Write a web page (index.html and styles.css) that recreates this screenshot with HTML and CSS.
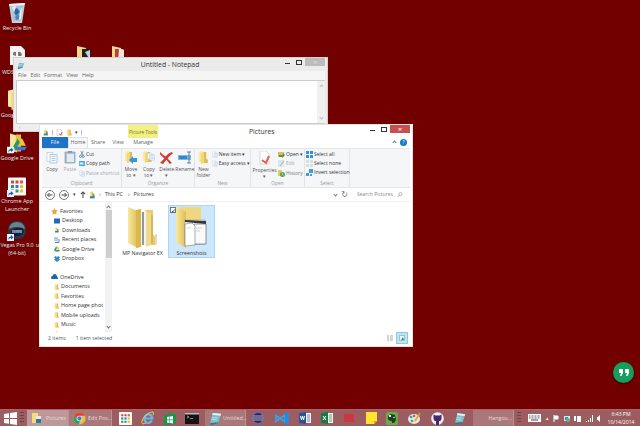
FILE: index.html
```html
<!DOCTYPE html>
<html lang="en">
<head>
<meta charset="utf-8">
<title>Desktop</title>
<link rel="stylesheet" href="styles.css">
</head>
<body>
<svg width="0" height="0" class="defs">
  <defs>
    <linearGradient id="gold" x1="0" x2="1"><stop offset="0" stop-color="#f8e8a0"/><stop offset="1" stop-color="#dfbd55"/></linearGradient>
    <symbol id="folder" viewBox="0 0 10 12"><path d="M1 1 5 0v11L1 10z" fill="#f9e9a3"/><path d="M5 1h3v6l1.5 1v3H4z" fill="#e2bb4c"/><path d="M3 2 6 1v10l-3 1z" fill="#f3d676"/></symbol>
    <symbol id="picfolder" viewBox="0 0 10 12"><path d="M2 1h4v9H2z" fill="#f0d16c"/><path d="M5 4h3v6H5z" fill="#6fa65f"/><path d="M1 8h7v3H1z" fill="#347fb3"/></symbol>
    <symbol id="drive" viewBox="0 0 12 12"><path d="M4 1h4l3 6H7z" fill="#f4c530"/><path d="M4 1 0 8l2 3 4-7z" fill="#2b9a5b"/><path d="M3 8h9l-2 3H2z" fill="#3777d8"/></symbol>
    <symbol id="shortcut" viewBox="0 0 7 7"><path d="M0 0h7v7H0z" fill="#eaf4ff"/><path d="M1.5 6Q1 3 4 2.6V1l2.5 2.4L4 5.5V4Q2 4 1.5 6z" fill="#1e5fa8"/></symbol>
    <symbol id="chrome" viewBox="0 0 14 14"><circle cx="7" cy="7" r="6.5" fill="#eac13a"/><path d="M1.3 4A6.5 6.5 0 0 1 12.9 4H7L4.5 8z" fill="#da4437"/><path d="M1.3 4 4.5 9l3 .8L6 13.4A6.5 6.5 0 0 1 1.3 4z" fill="#1fa463"/><circle cx="7" cy="7" r="3" fill="#f4f4f4"/><circle cx="7" cy="7" r="2.3" fill="#3f7fe0"/></symbol>
    <symbol id="apps" viewBox="0 0 18 18"><rect width="18" height="18" rx="1" fill="#fafafa"/><path d="M3 3h3v3H3zM7.5 3h3v3h-3z" fill="#dc4438"/><path d="M12 3h3v3h-3z" fill="#d95b48"/><path d="M3 7.5h3v3H3z" fill="#259b5a"/><path d="M7.5 7.5h3v3h-3z" fill="#3976d3"/><path d="M12 7.5h3v3h-3z" fill="#efbd2c"/><path d="M3 12h3v3H3zM7.5 12h3v3h-3z" fill="#269c5c"/><path d="M12 12h3v3h-3z" fill="#eebe32"/></symbol>
    <symbol id="notepad" viewBox="0 0 14 14"><path d="m4 1 9 1-3 10-9 1z" fill="#7bbfca"/><path d="m4 1 9 1-.6 2-9-1z" fill="#e5f5f8"/><path d="m3 6 6 .5M2.5 8l6 .5" stroke="#c4e8ee" stroke-width=".8"/><path d="m1 12 9-1v1l-8 2z" fill="#34757e"/></symbol>
    <symbol id="cut" viewBox="0 0 7 8"><path d="m2 0 3 5M5 0 2 5" stroke="#5b7188" stroke-width=".8"/><circle cx="1.8" cy="6.2" r="1.2" fill="none" stroke="#3185cc"/><circle cx="5" cy="6.2" r="1.2" fill="none" stroke="#3185cc"/></symbol>
    <symbol id="doc" viewBox="0 0 12 12"><path d="M1 1h6v9H1z" fill="#fff" stroke="#a1c4df" stroke-width=".6"/><path d="M4 3h7v8.5H4z" fill="#f5faff" stroke="#86add0" stroke-width=".6"/><path d="M5.5 5h4M5.5 7h4M5.5 9h4" stroke="#83abcf" stroke-width=".6"/></symbol>
    <symbol id="trashx" viewBox="0 0 12 12"><path d="M0 1q3 3 5 4 3-3 6-4l1 1Q8 5 7 7q2 2 4 4l-2 1-3-4q-2 2-3 4l-3-1 4-4Q2 5 0 3z" fill="#d7382c"/></symbol>
    <symbol id="search" viewBox="0 0 7 7"><circle cx="4" cy="2.5" r="1.8" fill="none" stroke="#888" stroke-width=".7"/><path d="M2.5 4 .5 6" stroke="#888" stroke-width=".8"/></symbol>
    <symbol id="bluefile" viewBox="0 0 8 7"><path d="M0 0h8v7H0z" fill="#4aa4dc"/><path d="M1 2h5v3H1z" fill="#d7effc"/></symbol>
    <symbol id="grid4" viewBox="0 0 7 7"><path d="M0 0h3v3H0zM4 0h3v3H4zM0 4h3v3H0zM4 4h3v3H4z"/></symbol>
  </defs>
</svg>

<div class="desktop">
  <figure class="shortcut" style="left:-8px;top:2px">
    <svg width="18" height="22" viewBox="0 0 18 22"><path d="m1 2 16-1-3 20H4z" fill="#c3d2df"/><path d="m3 4 12-1-2 16H5z" fill="#a9c0d3"/><path d="m5 8 4-2 3 4-4 4z" fill="#2568b1"/><path d="m7 15 4-3 1 5-4 1z" fill="#4a83bd"/><path d="m4 5 4-1-2 7zm8 4 2-4-1 12-2 1z" fill="#e6f0f6"/><path d="m1 2 16-1-.5 2-15 1z" fill="#eef2f4"/></svg>
    <figcaption>Recycle Bin</figcaption>
  </figure>
  <figure class="shortcut" style="left:-8px;top:46px">
    <svg width="15" height="19" viewBox="0 0 15 19"><path d="M0 0h11l4 4v15H0z" fill="#f5f4f2"/><path d="M3 9q0-4 3-3v4zm5 1V6q3-1 4 3l-1 1z" fill="#777"/></svg>
    <figcaption class="cap-wd">WDS</figcaption>
  </figure>
  <figure class="shortcut" style="left:59px;top:45px"><svg width="18" height="22" viewBox="0 0 18 22"><path d="m2 1 9 2v19H2z" fill="#f1d985"/><path d="M7 4h9v14H7z" fill="#222"/><path d="m10 7 5-2v10z" fill="#c7d0d5"/></svg></figure>
  <figure class="shortcut" style="left:94px;top:45px"><svg width="18" height="22" viewBox="0 0 18 22"><path d="m2 1 9 2v19H2z" fill="#f1d985"/><path d="M5 4h9v15H5z" fill="#c43c38"/><path d="m9 3 5 2v14H8z" fill="#e8e7df"/></svg></figure>
  <figure class="shortcut" style="left:-10px;top:89px">
    <svg width="18" height="21"><use href="#folder"/></svg><figcaption class="cap-goog">Goog</figcaption>
  </figure>
  <figure class="shortcut" style="left:-8px;top:132px">
    <svg width="20" height="22" viewBox="0 0 20 21"><path d="m3 1 7 2v17l-7-2z" fill="#f7e69c"/><path d="M9 2h5v17H8z" fill="#e1bd57"/><use href="#drive" x="6" y="5" width="14" height="14"/><use href="#shortcut" y="14" width="7" height="7"/></svg>
    <figcaption>Google Drive</figcaption>
  </figure>
  <figure class="shortcut" style="left:-8px;top:176px">
    <svg width="20" height="21" viewBox="0 0 20 21"><use href="#apps" x="1" y="1" width="18" height="19"/><use href="#shortcut" y="14" width="7" height="7"/></svg>
    <figcaption>Chrome App<br>Launcher</figcaption>
  </figure>
  <figure class="shortcut vegas" style="left:-8px;top:220px">
    <svg width="20" height="21" viewBox="0 0 20 21"><rect x="1" y="1" width="18" height="18" rx="8" fill="#283743"/><path d="M2 9q1-7 8-7t8 7q-8-4-16 0z" fill="#6c8190"/><path d="m3 12 5-4h7l2 4-5 4H6z" fill="#18202f"/><path d="M5 10h10v3H5z" fill="#8376b7"/><path d="M9 10h5v2H9z" fill="#49a6b2"/><use href="#shortcut" y="14" width="7" height="7"/></svg>
    <figcaption>Vegas Pro 9.0<br>(64-bit)</figcaption>
  </figure>
  <figure class="shortcut behind" style="left:35px;top:241px"><figcaption>u</figcaption></figure>

  <section class="window notepad">
    <header class="np-title"><svg width="8" height="8"><use href="#notepad"/></svg><h1>Untitled - Notepad</h1>
      <div class="controls"><i class="min"></i><i class="max"></i><b class="close grey">×</b></div></header>
    <nav class="np-menu"><span>File</span><span>Edit</span><span>Format</span><span>View</span><span>Help</span></nav>
    <div class="np-body"><div class="np-page"></div><div class="np-scroll"><i class="chev up"></i><i class="chev down"></i></div></div>
    <div class="np-bottom">‹</div>
  </section>

  <section class="window explorer">
    <header class="ex-title">
      <div class="quick"><svg width="6" height="7"><use href="#picfolder"/></svg><i></i><svg width="7" height="7" viewBox="0 0 7 7"><path d="M1 0h3l2 2v5H1z" fill="#fff" stroke="#aaa" stroke-width=".5"/><path d="m3 5 2 1 1-3" stroke="#d45e52" fill="none"/></svg><svg width="6" height="7"><use href="#folder"/></svg><small>▾</small><i></i></div>
      <div class="picture-tools">Picture Tools</div>
      <h1>Pictures</h1>
      <div class="controls"><i class="min"></i><i class="max"></i><b class="close">×</b></div>
    </header>
    <nav class="tabs"><b class="file">File</b><span class="active">Home</span><span>Share</span><span>View</span><span class="manage">Manage</span><span class="help"><i class="chev up"></i><b>?</b></span></nav>
    <div class="ribbon">
      <div class="group clipboard">
        <div class="tools">
          <div class="big"><svg width="12" height="13"><use href="#doc"/></svg>Copy</div>
          <div class="big paste"><svg width="12" height="13" viewBox="0 0 12 13"><path d="M1 1h10v11H1z" fill="#b1bfd5" stroke="#8495b4" stroke-width=".7"/><path d="M3 3h7v8H3z" fill="#e2eaf4"/><path d="M4 0h4v2H4z" fill="#8999ae"/></svg><em>Paste</em></div>
          <div class="list"><span><svg width="6" height="7"><use href="#cut"/></svg>Cut</span><span><svg width="6" height="5"><use href="#bluefile"/></svg>Copy path</span><span class="off"><svg width="6" height="7"><use href="#doc"/></svg>Paste shortcut</span></div>
        </div><small>Clipboard</small>
      </div>
      <div class="group organize">
        <div class="tools">
          <div class="big"><svg width="13" height="13" viewBox="0 0 13 13"><use href="#folder" width="10" height="12"/><path d="m5 9 4-4v2h4v4H9v2z" fill="#3597dc"/></svg>Move<br>to ▾</div>
          <div class="big"><svg width="13" height="13" viewBox="0 0 13 13"><use href="#folder" width="10" height="12"/><use href="#doc" x="5" width="8" height="11"/></svg>Copy<br>to ▾</div>
          <div class="big"><svg width="13" height="13"><use href="#trashx"/></svg>Delete<br>▾</div>
          <div class="big"><svg width="14" height="13" viewBox="0 0 14 13"><path d="M0 4h13v5H0z" fill="#7bb9e3"/><path d="M1 5h8v3H1z" fill="#3189cc"/><path d="M9 1h4m-2 0v11m-2 0h4" stroke="#56738e" stroke-width=".9"/></svg>Rename</div>
        </div><small>Organize</small>
      </div>
      <div class="group new">
        <div class="tools">
          <div class="big"><svg width="12" height="13"><use href="#folder"/></svg>New<br>folder</div>
          <div class="list"><span><svg width="6" height="7"><use href="#doc"/></svg>New item ▾</span><span><svg width="6" height="7"><use href="#doc"/></svg>Easy access ▾</span></div>
        </div><small>New</small>
      </div>
      <div class="group open">
        <div class="tools">
          <div class="big"><svg width="13" height="14" viewBox="0 0 13 14"><path d="M2 0h6l3 3v10H2z" fill="#fff" stroke="#c2c2c2" stroke-width=".6"/><path d="m4 9 4 3 3-7" fill="none" stroke="#df624f" stroke-width="2"/></svg>Properties<br>▾</div>
          <div class="list"><span><svg width="7" height="7" viewBox="0 0 7 7"><path d="M0 1h6v5H0z" fill="#e0bb5a"/><path d="M1 4h4V2l2 2-3 3V6H1z" fill="#4d9854"/></svg>Open ▾</span><span class="off"><svg width="7" height="7" viewBox="0 0 7 7"><path d="M0 0h6v7H0z" fill="#dbe5ef"/><path d="m2 6 4-5" stroke="#a0b4ca"/></svg>Edit</span><span class="history"><svg width="7" height="7" viewBox="0 0 7 7"><path d="M0 0h4v6H0z" fill="#ecc65c"/><circle cx="4.5" cy="4.5" r="2.5" fill="#4fa855"/><path d="M4.5 3v2h1" stroke="#fff" stroke-width=".5" fill="none"/></svg>History</span></div>
        </div><small>Open</small>
      </div>
      <div class="group select">
        <div class="tools"><div class="list"><span><svg width="7" height="7" fill="#2d91de"><use href="#grid4"/></svg>Select all</span><span><svg width="7" height="7" fill="#d9dee3"><use href="#grid4"/></svg>Select none</span><span><svg width="7" height="7" viewBox="0 0 7 7"><path d="M3 0h4v4H3zM0 4h3v3H0zM4 5h2v2H4z" fill="#3c9de4"/></svg>Invert selection</span></div></div><small>Select</small>
      </div>
    </div>
    <div class="address"><span class="round"><svg width="6" height="6" viewBox="0 0 6 6"><path d="M5.500 3h-5M2.500 1l-2 2 2 2" fill="none" stroke="#444"/></svg></span><span class="round"><svg width="6" height="6" viewBox="0 0 6 6"><path d="M.5 3h5M3.500 1l2 2-2 2" fill="none" stroke="#444"/></svg></span><small>▾</small><svg width="6" height="7" viewBox="0 0 6 7"><path d="M3 7V1M.8 3.200 3 1l2.200 2.200" fill="none" stroke="#555" stroke-width="1.100"/></svg><svg class="place" width="7" height="8"><use href="#picfolder"/></svg><i>›</i><span>This PC</span><i class="second-sep">›</i><span>Pictures</span><i class="chev down"></i><em>↻</em><span class="find">Search Pictures</span><svg width="6" height="6"><use href="#search"/></svg></div>
    <div class="ex-body">
      <aside class="tree">
        <p><svg width="7" height="7" viewBox="0 0 7 7"><path d="m3.5 0 1 2.2 2.5.3-2 1.7.6 2.5-2.1-1.2-2.2 1.2.6-2.5L0 2.5l2.5-.3z" fill="#eba52d"/></svg>Favorites</p>
        <p class="child"><svg width="6" height="6"><rect width="6" height="5" y=".5" fill="#2668b6"/></svg>Desktop</p>
        <p class="child"><svg width="6" height="6"><use href="#picfolder"/></svg>Downloads</p>
        <p class="child"><svg width="6" height="6" viewBox="0 0 6 6"><path d="M0 0h4v4H0z" fill="#b4cde3"/><path d="M1 5.5h4V2" fill="none" stroke="#4687bd"/></svg>Recent places</p>
        <p class="child"><svg width="6" height="6"><use href="#drive"/></svg>Google Drive</p>
        <p class="child"><svg width="6" height="6" viewBox="0 0 6 6"><path d="m1.5 0 1.5 1L4.5 0 6 1.5 4.8 2.5 6 3.500 3 6 0 3.500l1.200-1L0 1.500z" fill="#328bc9"/></svg>Dropbox</p>
        <p class="cloud"><svg width="7" height="6" viewBox="0 0 7 6"><path d="M0 4q0-2 1.500-2Q2 0 3.800 0q1.800 0 2 2Q7 3 7 5H1Q0 5 0 4z" fill="#1767b0"/></svg>OneDrive</p>
        <p class="child"><svg width="5" height="6"><use href="#folder"/></svg>Documents</p>
        <p class="child"><svg width="5" height="6"><use href="#folder"/></svg>Favorites</p>
        <p class="child"><svg width="5" height="6"><use href="#folder"/></svg>Home page phot</p>
        <p class="child"><svg width="5" height="6"><use href="#folder"/></svg>Mobile uploads</p>
        <p class="child"><svg width="5" height="6"><use href="#folder"/></svg>Music</p>
        <p class="child"><svg width="5" height="6"><use href="#folder"/></svg>Pictures</p>
      </aside>
      <div class="scroll"><i class="chev up"></i><b></b><i class="chev down"></i></div>
      <div class="files">
        <div class="item"><svg width="34" height="43" viewBox="0 0 34 43"><path d="M19 4h8v24l3 4v7H17z" fill="#e9cb69"/><path d="m2 1 10 4v37L2 37z" fill="url(#gold)"/><path d="m10 4 5-1v38l-5 1z" fill="#dbb84f"/><path d="m15 6 6-1v34l-6 1z" fill="#f4f3ee"/><path d="M17 6v33" stroke="#92989f" stroke-width="2"/><path d="m20 6 5 1v32l-5 2z" fill="#efda89"/><path d="M26 9v29" stroke="#c5a242"/><path d="M30 28v10" stroke="#ded9ca" stroke-width="2"/></svg>MP Navigator EX</div>
        <div class="item selected"><span class="check">✓</span><svg width="38" height="43" viewBox="0 0 38 43"><path d="M7 1h21v33H7z" fill="#f0d77d"/><path d="m3 1 10 5v36L3 36z" fill="url(#gold)"/><path d="M12 14h20v24H12z" fill="#fff" stroke="#858585" stroke-width=".5"/><path d="m12 14 21 1v3l-21-2z" fill="#33373a"/><path d="M21 18h12v20H21z" fill="#fafafa" stroke="#333" stroke-width=".5"/><path d="m12 18 7-1 3 3v19l-10 1z" fill="#fff" stroke="#777" stroke-width=".6"/><path d="M14 22h4m5 0h6m-6 3h4" stroke="#bbb" stroke-width=".6"/></svg>Screenshots</div>
      </div>
    </div>
    <footer class="status"><span>2 items</span><span>1 item selected</span><div><svg width="6" height="6" viewBox="0 0 6 6"><path d="M0 1h2M3 1h3M0 3h2M3 3h3M0 5h2M3 5h3" stroke="#a2abb2"/></svg><b><svg width="6" height="6" viewBox="0 0 6 6"><path d="M.5.5h5v5h-5z" fill="#e5f7fd" stroke="#6aadc2" stroke-width=".6"/><path d="m2 5 2-3 1 3z" fill="#4a7d8b"/></svg></b></div></footer>
  </section>

  <div class="hangout"><svg width="10" height="8" viewBox="0 0 10 8"><path d="M0 0h4v4L2.500 7H1l1-3H0zm6 0h4v4L8.500 7H7l1-3H6z" fill="#fff"/></svg></div>

  <footer class="taskbar">
    <svg class="start" width="13" height="13" viewBox="0 0 13 13"><path d="m0 2 5-.8V6H0zm6-1 7-1v6H6zM0 7h5v4.800L0 11zm6 0h7v6l-7-1z" fill="#fff"/></svg><i class="grip"></i>
    <div class="task active-task"><svg width="11" height="13" viewBox="0 0 11 13"><path d="M1 1h6v10H1z" fill="#f4db80"/><path d="M5 4h5v5H5z" fill="#eceadb"/><path d="M5 7h5v4H5z" fill="#2a78a2"/></svg><span>Pictures</span></div>
    <div class="task chrome"><svg width="13" height="13"><use href="#chrome"/></svg><span>Edit Pos...</span></div>
    <div class="icons first">
      <svg width="13" height="13"><use href="#apps"/></svg>
      <svg width="14" height="14" viewBox="0 0 14 14"><path d="M11 9.500q-3 4-6 1.600Q2.800 9 3.500 6.500 5 2.800 8 3.300q3 .6 3.300 4.200H4.500" fill="none" stroke="#60bced" stroke-width="2.200"/><path d="M12 4q2-5-4-2Q1 6 .8 11.500 1 14 5 12" fill="none" stroke="#eaca55"/></svg>
      <svg width="12" height="13" viewBox="0 0 12 13"><path d="m0 3 12-1v10l-12 1z" fill="#159747"/><path d="M4 3q0-3 2-3t2 2" stroke="#159747" fill="none"/><path d="m3 5 2.500-.4v3H3zm3-.5 3-.4v3.500H6zM3 8.200h2.500V11L3 10.700zm3 0h3v3.200L6 11z" fill="#fff"/></svg>
      <svg width="14" height="11" viewBox="0 0 14 11"><path d="M0 0h14v11H0z" fill="#141414"/><path d="M0 0h14v1.500H0z" fill="#bbb"/><path d="m2 3 2 1-2 1m3 .5h3" stroke="#ddd" stroke-width=".6" fill="none"/></svg>
    </div>
    <div class="task note"><svg width="13" height="13"><use href="#notepad"/></svg><span>Untitled...</span></div>
    <div class="icons second">
      <svg width="14" height="14" viewBox="0 0 14 14"><circle cx="7" cy="7" r="6.500" fill="#75659a"/><circle cx="7" cy="7" r="5" fill="#302558"/><path d="M2 5h10M1.500 7h11M2 9h10" stroke="#d7d0e5" stroke-width=".8"/></svg>
      <svg width="14" height="13" viewBox="0 0 14 13"><path d="m1 3.500 9 6.500V3L1 9.500z" fill="none" stroke="#35a3e6" stroke-width="1.800"/><path d="m10 0 4 2v9l-4 2z" fill="#1e8fd8"/></svg>
      <svg width="12" height="12" viewBox="0 0 12 12"><path d="M6 1h6v10H6z" fill="#eef4fc"/><path d="m0 1 7-1v12l-7-1z" fill="#265698"/><path d="m1.500 4 1 4 1-4 1 4 1-4" stroke="#fff" fill="none"/><path d="M8 3h3M8 5h3M8 7h3M8 9h3" stroke="#3465a5" stroke-width=".7"/></svg>
      <svg width="12" height="12" viewBox="0 0 12 12"><path d="M6 1h6v10H6z" fill="#eff9f0"/><path d="m0 1 7-1v12l-7-1z" fill="#197845"/><path d="m2 4 3 4m0-4L2 8" stroke="#fff"/><path d="M8 3h3M8 5h3M8 7h3M8 9h3" stroke="#28804d" stroke-width=".7"/></svg>
      <svg width="12" height="12"><path d="M1 2h10v8H1z" fill="#ce3543"/></svg>
      <svg width="12" height="12" viewBox="0 0 12 12"><path d="M1 0h11v9l-3 3H1z" fill="#ffe32f"/><path d="m12 9-3 3V9z" fill="#c8ac18"/></svg>
      <svg width="12" height="13" viewBox="0 0 12 13"><rect width="12" height="13" rx="2" fill="#6aaa4c"/><path d="m2 4 3-2 4 1 1 5-2 3H6V9H4L2 7z" fill="#203f28"/><path d="M3 3h2v2H3z" fill="#eee"/><circle cx="8" cy="5.500" r=".7" fill="#fff"/></svg>
      <svg width="13" height="13" viewBox="0 0 13 13"><ellipse cx="6" cy="7" rx="6" ry="5" fill="#e3e8df"/><circle cx="3" cy="5" r="1.300" fill="#399bd4"/><circle cx="6" cy="4" r="1.300" fill="#da5644"/><circle cx="4" cy="9" r="1.300" fill="#52a95a"/><path d="m7 9 5-8" stroke="#d6a13e" stroke-width="1.500"/></svg>
      <svg width="13" height="13" viewBox="0 0 13 13"><circle cx="6.500" cy="6.500" r="6.300" fill="#f0eef2"/><path d="m2.500 2.500 2 1h4l2-1v4q0 2.500-2.500 2.800V13H5V9.300Q2.500 9 2.500 6.500z" fill="#48276e"/></svg>
      <svg width="12" height="13"><use href="#notepad"/></svg>
    </div>
    <div class="task hang"><span>Hangou...</span></div><i class="grip"></i>
    <div class="tray">
      <svg width="13" height="8" viewBox="0 0 13 8"><path d="M0 0h13v8H0z" fill="#fff"/><path d="M1 2h11M1 4h11" stroke="#444" stroke-width=".9" stroke-dasharray="1 .5"/><path d="M3 6h7" stroke="#444"/></svg>
      <span>▴</span>
      <svg width="6" height="7" viewBox="0 0 6 7"><path d="M1 0v7M1 1h4v3H1" stroke="#fff" fill="#fff"/></svg>
      <svg width="6" height="7" viewBox="0 0 6 7"><path d="M0 1h6v5H0z" fill="#d4e5f4"/><path d="M1 2h3v3H1z" fill="#3f88cc"/><circle cx="4" cy="5" r="2" fill="#58b770"/></svg>
      <svg width="7" height="7" viewBox="0 0 7 7"><path d="M0 1h2v5H0M3 1h4v6H3z" fill="#fff"/></svg>
      <svg width="7" height="7" viewBox="0 0 7 7"><path d="M0 6h1v1H0zM2 5h1v2H2zM4 3h1v4H4zM6 0h1v7H6z" fill="#fff"/></svg>
      <svg width="5" height="7" viewBox="0 0 5 7"><path d="M0 2h1l2-2v7L1 5H0z" fill="#fff"/></svg>
    </div>
    <time>6:43 PM<br>10/14/2014</time>
  </footer>
</div>
</body>
</html>
```
FILE: styles.css
```css
* { box-sizing: border-box; }
body { margin: 0; overflow: hidden; font: 5.4px/7px "Open Sans", "Noto Sans", sans-serif; color: #333; }
h1, p, figure { margin: 0; font-weight: 400; }
svg { display: block; flex: none; }
i, em { font-style: normal; }
b { font-weight: 400; }
.defs { position: absolute; }
.desktop { position: relative; width: 640px; height: 426px; background: #730000; overflow: hidden; white-space: nowrap; }
.shortcut { position: absolute; width: 50px; display: flex; flex-direction: column; align-items: center; color: #f6eaea; text-align: center; font-size: 5.5px; line-height: 7.5px; text-shadow: 0 1px 1px #300; }
.shortcut.behind { width: 5px; }
.cap-wd { margin: 3px 18px 0 0; }
.cap-goog { margin: 1px 15px 0 0; }
.shortcut figcaption { padding-top: 1px; }
.vegas figcaption { font-size: 5.3px; }

.window { position: absolute; display: flex; flex-direction: column; }
.controls { display: flex; align-items: center; justify-content: flex-end; height: 9px; }
.min { width: 5px; height: 1px; background: #333; margin: 2px 6px 0 0; }
.max { width: 6px; height: 5px; border: 1px solid #333; border-top-width: 1.5px; margin-right: 3px; }
.close { width: 20px; height: 8px; background: #c84f51; color: #fff; text-align: center; font: 8px/7px "Open Sans", sans-serif; align-self: flex-start; }
.close.grey { background: #bcbcbc; color: #ddd; }

.notepad { left: 13px; top: 57px; width: 315px; height: 75px; background: #ebebeb; border: 1px solid #d2d2d2; padding: 0 2px 1px; }
.np-title { display: grid; grid-template-columns: 9px 1fr 46px; height: 13px; padding-left: 1px; align-items: center; }
.np-title h1 { font-size: 6.8px; text-align: center; padding-left: 35px; }
.np-title .controls { align-self: start; }
.np-menu { display: flex; gap: 4px; height: 9px; padding: 1px 2px; background: #f5f5f5; color: #666; font-size: 5.4px; }
.np-body { display: flex; height: 44px; background: #fff; border: 1px solid #ccc; border-right: 0; }
.np-page { flex: 1; }
.np-scroll { width: 8px; background: #f0f0f0; display: flex; flex-direction: column; justify-content: space-between; align-items: center; padding: 4px 0; }
.np-scroll .chev { border-color: #bbb; }
.np-bottom { height: 6px; padding-left: 3px; color: #999; background: #eee; }

.explorer { left: 39px; top: 124px; width: 374px; height: 223px; background: #fff; border: 1px solid #e5e2e2; padding: 0 2px 2px; }
.ex-title { display: grid; grid-template-columns: 86px 30px 1fr 46px; height: 12px; }
.quick { display: flex; gap: 3px; align-items: center; padding: 1px 0 0 1px; }
.quick i { width: 1px; height: 5px; background: #bbb; }
.picture-tools { background: #f2ef83; color: #777233; text-align: center; padding-top: 4px; font-size: 4.7px; line-height: 7px; }
.ex-title h1 { font-size: 6.8px; line-height: 13px; padding-left: 91px; }
.tabs { height: 11px; display: flex; font-size: 5.3px; line-height: 10px; color: #666; }
.tabs > span { text-align: center; width: 20px; }
.tabs .file { width: 26px; background: #1d73c4; color: #e5f2ff; text-align: center; }
.tabs .active { width: 20px; background: #f7f8fa; border: solid #dfe1e3; border-width: 1px 1px 0; line-height: 9px; }
.tabs .manage { width: 30px; }
.tabs .help { margin-left: auto; width: 21px; display: flex; gap: 4px; align-items: center; padding-left: 4px; }
.help b { width: 7px; height: 7px; border-radius: 50%; background: #167bc8; color: #fff; line-height: 7px; font-size: 5px; }
.chev { width: 3px; height: 3px; border: solid #777; border-width: .8px 0 0 .8px; transform: rotate(45deg); }
.chev.down { transform: rotate(225deg); }
.ribbon { height: 40px; display: flex; background: #f5f6f7; border: solid #e5e6e8; border-width: 1px 0; font-size: 5px; }
.group { display: flex; flex-direction: column; justify-content: space-between; border-right: 1px solid #e2e3e4; }
.group > small { font-size: 4.9px; line-height: 8px; text-align: center; color: #999; }
.tools { display: flex; }
.big { width: 18px; display: flex; flex-direction: column; align-items: center; text-align: center; line-height: 6px; padding-top: 2px; gap: 1.5px; color: #555; }
.paste, .off { color: #aaa; }
.paste em { color: #aaa; }
.list { padding-top: 1px; display: flex; flex-direction: column; }
.list span { display: flex; align-items: center; gap: 1px; height: 9.3px; }
.clipboard { width: 80px; }
.clipboard .tools { padding-left: 1px; }
.organize { width: 73px; }
.organize .big { width: 18.2px; }
.new { width: 56px; }
.new .big { width: 20px; }
.new .tools { padding-left: 0; }
.open { width: 54px; }
.open .big { width: 27px; }
.history { color: #777; }
.select { width: 45px; }
.select .list { padding-left: 1px; }
.select .list span { height: 9px; }

.address { height: 14px; display: flex; align-items: center; gap: 4px; padding: 0 7px 0 3px; border-bottom: 1px solid #f0f0f0; font-size: 5.4px; }
.round { width: 10px; height: 10px; border: 1px solid #777; border-radius: 50%; display: grid; place-items: center; }
.address .place { margin-left: -1px; }
.address i:not(.chev) { margin-left: -1px; }
.address i.second-sep { margin-left: 1px; }
.address .down { margin-left: auto; }
.address em { font: 8px/8px "DejaVu Sans", sans-serif; color: #777; }
.address .find { margin-left: 5px; width: 36px; color: #888; font-size: 5px; }
.ex-body { flex: 1; min-height: 0; display: flex; }
.tree { width: 63px; overflow: hidden; padding: 4.6px 0 0 9px; }
.tree p { height: 9.45px; display: flex; gap: 2px; align-items: center; }
.tree .child { padding-left: 3px; }
.tree .cloud { margin-top: 9.5px; }
.scroll { width: 7px; background: #f2f2f2; display: flex; flex-direction: column; align-items: center; padding-top: 4px; }
.scroll b { width: 6px; height: 48px; background: #cecece; margin-top: 1px; }
.scroll .down { margin: auto 0 4px; }
.files { display: flex; gap: 2px; padding: 3px 0 0 7px; }
.item { position: relative; width: 47px; height: 53px; display: flex; flex-direction: column; align-items: center; gap: 1px; border: 1px solid transparent; font-size: 5.3px; }
.item.selected { background: #cce6fb; border-color: #abd6f5; }
.check { position: absolute; left: 1px; top: 1px; width: 6px; height: 6px; background: #fff; border: .5px solid #777; font: 6px/6px "DejaVu Sans", sans-serif; color: #111; }
.status { display: flex; gap: 10px; height: 12px; padding: 0 0 0 6px; align-items: center; color: #4c5d72; font-size: 5.2px; }
.status div { margin-left: auto; display: flex; gap: 3px; align-items: center; padding-right: 2px; }
.status b { padding: 2px; border: 1px solid #91c8dc; background: #bce5f3; }

.hangout { position: absolute; left: 613px; top: 362px; width: 21px; height: 21px; border-radius: 50%; background: #169f5c; display: grid; place-items: center; box-shadow: 0 1px 2px #300; }
.taskbar { position: absolute; inset: 409px 0 0; background: #9c5d60; border-top: 1px solid #a86669; display: flex; align-items: center; color: #fff; font-size: 5.3px; }
.start { margin-left: 4px; }
.grip { width: 4px; height: 12px; margin: 0 3px; background: repeating-linear-gradient(#783f43 0 1px, transparent 1px 3px); }
.task { height: 16px; display: flex; align-items: center; background: #aa777a; border-right: 1px solid #bd9194; padding-left: 4px; gap: 4px; color: #eadada; }
.active-task { width: 42px; background: #be999b; }
.task.chrome { width: 43px; gap: 2px; }
.icons { display: flex; align-items: center; }
.icons.first { gap: 9.2px; padding: 0 6px 0 6.5px; }
.task.note { width: 41px; gap: 1px; }
.icons.second { gap: 9.9px; padding-left: 5px; }
.task.hang { margin-left: auto; width: 41px; justify-content: flex-end; padding-right: 1px; }
.tray { display: flex; gap: 4.5px; align-items: center; padding-left: 4px; }
.tray span { font-size: 5px; }
time { width: 38px; text-align: center; line-height: 8px; font-size: 5.1px; }
```
